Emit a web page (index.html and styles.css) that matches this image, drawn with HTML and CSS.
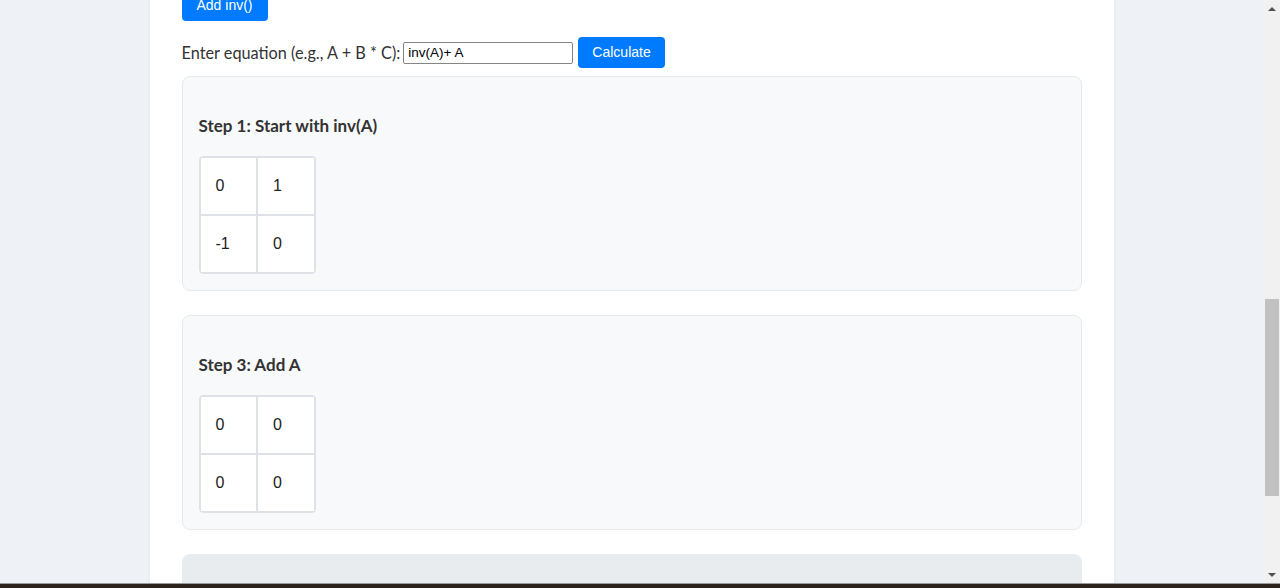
FILE: index.html
```html
<!DOCTYPE html>
<html lang="en">
<head>
    <meta charset="UTF-8">
    <title>Matrix Calculator</title>
    <link rel="stylesheet" href="styles.css">
</head>
<body>
<div class="screen">
    <div class="viewport">
        <div class="page">
            <div class="container">
                <button class="btn" id="addInv">Add inv()</button>

                <div class="equation-row">
                    <label for="equation">Enter equation (e.g., A + B * C):</label>
                    <input type="text" id="equation" value="inv(A)+ A">
                    <button class="btn" id="calcButton">Calculate</button>
                </div>

                <!-- Các bước tính toán -->
                <div class="step">
                    <h4>Step 1: Start with inv(A)</h4>
                    <table class="matrix">
                        <tr><td>0</td><td>1</td></tr>
                        <tr><td>-1</td><td>0</td></tr>
                    </table>
                </div>

                <div class="step">
                    <h4>Step 3: Add A</h4>
                    <table class="matrix">
                        <tr><td>0</td><td>0</td></tr>
                        <tr><td>0</td><td>0</td></tr>
                    </table>
                </div>

                <div class="result"></div>
            </div>
        </div>

        <div class="scrollbar">
            <div class="arrow up"></div>
            <div class="track">
                <div class="thumb"></div>
            </div>
            <div class="arrow down"></div>
        </div>
    </div>
    <div class="taskbar"></div>
</div>
</body>
</html>
```

FILE: styles.css
```css
body {
    margin: 0;
    height: 588px;
    overflow: hidden;
    font-family: Lato, "Noto Sans", sans-serif;
    color: #333;
}
.screen {
    display: flex;
    flex-direction: column;
    height: 588px;
}
.viewport {
    display: flex;
    height: 583px;
}
.page {
    flex: 1;
    overflow: hidden;
    background-color: #eef2f7;
}
.container {
    width: 900px;
    margin: -10px auto 0;
    padding: 0 32px;
    background: white;
    box-shadow: 0 0 6px rgba(0,0,0,0.04);
    min-height: 700px;
}
.btn {
    padding: 7px 15px;
    line-height: 17px;
    background-color: #007bff;
    color: white;
    border: none;
    border-radius: 4px;
    font-family: "Liberation Sans", Arial, sans-serif;
    font-size: 14px;
    cursor: pointer;
}
#calcButton {
    padding: 7px 14px;
    margin-left: 2px;
}
.equation-row {
    display: flex;
    align-items: center;
    gap: 3px;
    margin-top: 16px;
    margin-bottom: 8px;
    font-size: 16.3px;
}
.equation-row input {
    width: 170px;
    height: 22px;
    box-sizing: border-box;
    padding: 0 4px;
    border: 1px solid #858585;
    border-radius: 2px;
    font-family: "Liberation Sans", Arial, sans-serif;
    font-size: 13.5px;
    color: #000;
}
.step {
    background-color: #f8f9fa;
    border: 1px solid #e6e9ec;
    border-radius: 8px;
    padding: 16px;
    margin-bottom: 24px;
}
.step h4 {
    margin: 21px 0 18px;
    font-size: 17px;
    line-height: 24px;
    font-weight: bold;
    color: #333;
}
.matrix {
    border-collapse: separate;
    border-spacing: 0;
    border: 1px solid #dee2e6;
    border-radius: 4px;
    background: white;
}
.matrix td {
    width: 25.5px;
    height: 26px;
    padding: 15px;
    border: 1px solid #dee2e6;
    font-family: "Liberation Sans", Arial, sans-serif;
    font-size: 16px;
    color: #222;
}
.result {
    height: 60px;
    background-color: #e9ecef;
    border-radius: 8px 8px 0 0;
}
.scrollbar {
    width: 17px;
    display: flex;
    flex-direction: column;
    background-color: #f1f1f1;
}
.track {
    flex: 1;
    padding-top: 282px;
}
.thumb {
    width: 14px;
    height: 197px;
    margin-left: 2px;
    background-color: #c1c1c1;
}
.arrow {
    height: 17px;
    display: flex;
    align-items: center;
    justify-content: center;
}
.arrow::after {
    content: "";
    border-left: 4px solid transparent;
    border-right: 4px solid transparent;
}
.arrow.up::after {
    border-bottom: 4px solid #505050;
}
.arrow.down::after {
    border-top: 4px solid #505050;
}
.taskbar {
    height: 5px;
    background-color: #2c241c;
    border-top: 1px solid #9a9a9a;
    box-sizing: border-box;
}
```
